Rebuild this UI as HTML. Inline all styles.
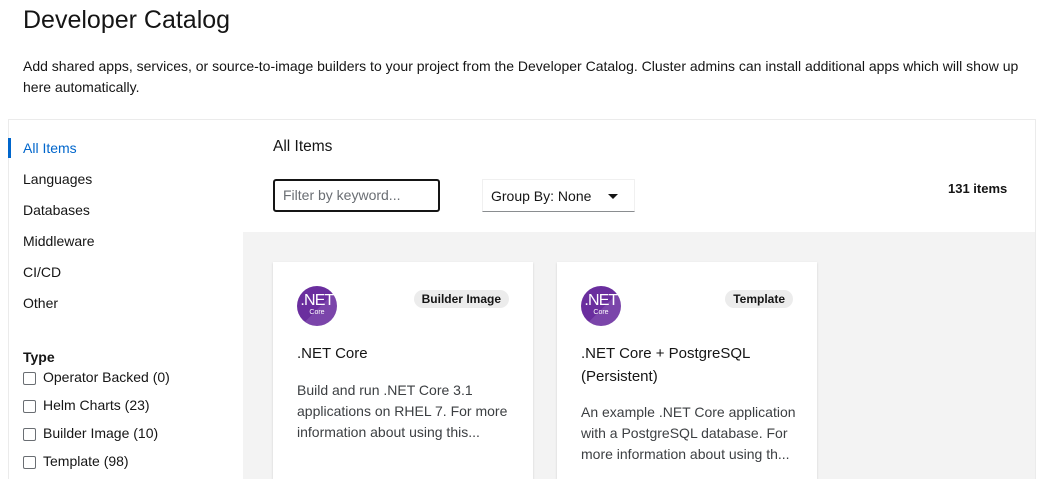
<!DOCTYPE html>
<html><head><meta charset="utf-8"><style>
*{margin:0;padding:0;box-sizing:border-box}
html,body{width:1045px;height:479px;overflow:hidden}
body{background:#fff;font-family:"Liberation Sans",sans-serif;color:#151515;position:relative}
.a{position:absolute;white-space:nowrap}
h1{position:absolute;left:23px;top:6px;font-size:25px;font-weight:normal}
.desc{left:23px;top:56px;font-size:14px;line-height:21px;white-space:normal;width:1010px}
.box{position:absolute;left:8px;top:119px;width:1028px;height:360px;border:1px solid #ebebeb;border-bottom:none}
.nav{font-size:14px;left:23px}
.gray{position:absolute;left:243px;top:232px;width:792px;height:247px;background:#f3f3f3}
.card{position:absolute;top:262px;width:260px;height:217px;background:#fff;box-shadow:0 1px 2px rgba(0,0,0,.15)}
.logo{position:absolute;left:24px;top:24px;width:40px;height:40px;border-radius:50%;background:linear-gradient(135deg,#6a2e9e 55%,#7b45aa 55%);color:#fff;text-align:center}
.logo b{display:block;font-weight:normal;font-size:16px;line-height:16px;margin-top:7px;letter-spacing:-0.8px}
.logo i{display:block;font-style:normal;font-size:7px;line-height:8px}
.badge{position:absolute;top:28px;right:24px;background:#ececec;border-radius:10px;font-size:12px;font-weight:bold;padding:2px 8px;line-height:14px}
.title{position:absolute;left:24px;top:80px;font-size:15px;line-height:23px}
.text{position:absolute;left:24px;font-size:14px;line-height:21px;color:#3c3f42;width:230px}
.cb{position:absolute;left:23px;width:13px;height:13px;border:1px solid #6a6e73;border-radius:2px}
.cl{font-size:14px;left:43px}
</style></head><body>
<h1>Developer Catalog</h1>
<div class="a desc">Add shared apps, services, or source-to-image builders to your project from the Developer Catalog. Cluster admins can install additional apps which will show up<br>here automatically.</div>
<div class="box"></div>
<div style="position:absolute;left:8px;top:138px;width:3px;height:20px;background:#06c"></div>
<div class="a nav" style="top:140px;color:#06c">All Items</div>
<div class="a nav" style="top:171px">Languages</div>
<div class="a nav" style="top:202px">Databases</div>
<div class="a nav" style="top:233px">Middleware</div>
<div class="a nav" style="top:264px">CI/CD</div>
<div class="a nav" style="top:295px">Other</div>
<div class="a nav" style="top:349px;font-weight:bold">Type</div>
<div class="cb" style="top:372px"></div><div class="a cl" style="top:369px">Operator Backed (0)</div>
<div class="cb" style="top:400px"></div><div class="a cl" style="top:397px">Helm Charts (23)</div>
<div class="cb" style="top:428px"></div><div class="a cl" style="top:425px">Builder Image (10)</div>
<div class="cb" style="top:456px"></div><div class="a cl" style="top:453px">Template (98)</div>
<div class="a" style="left:273px;top:138px;font-size:15.5px">All Items</div>
<div class="a" style="left:273px;top:179px;width:167px;height:33px;border:2px solid #151515;border-radius:3px;font-size:14px;color:#6a6e73;padding:6px 8px">Filter by keyword...</div>
<div class="a" style="left:482px;top:179px;width:153px;height:33px;border:1px solid #f0f0f0;border-bottom-color:#8a8d90;font-size:14px;padding:8px 8px">Group By: None<span style="position:absolute;left:125px;top:14px;border:5px solid transparent;border-top:5px solid #151515;border-bottom:none"></span></div>
<div class="a" style="left:948px;top:181px;font-size:13px;font-weight:bold">131 items</div>
<div class="gray"></div>
<div class="card" style="left:273px">
<div class="logo"><b>.NET</b><i>Core</i></div>
<div class="badge">Builder Image</div>
<div class="title">.NET Core</div>
<div class="text" style="top:118px">Build and run .NET Core 3.1 applications on RHEL 7. For more information about using this...</div>
</div>
<div class="card" style="left:557px">
<div class="logo"><b>.NET</b><i>Core</i></div>
<div class="badge">Template</div>
<div class="title">.NET Core + PostgreSQL<br>(Persistent)</div>
<div class="text" style="top:140px">An example .NET Core application with a PostgreSQL database. For more information about using th...</div>
</div>
</body></html>
